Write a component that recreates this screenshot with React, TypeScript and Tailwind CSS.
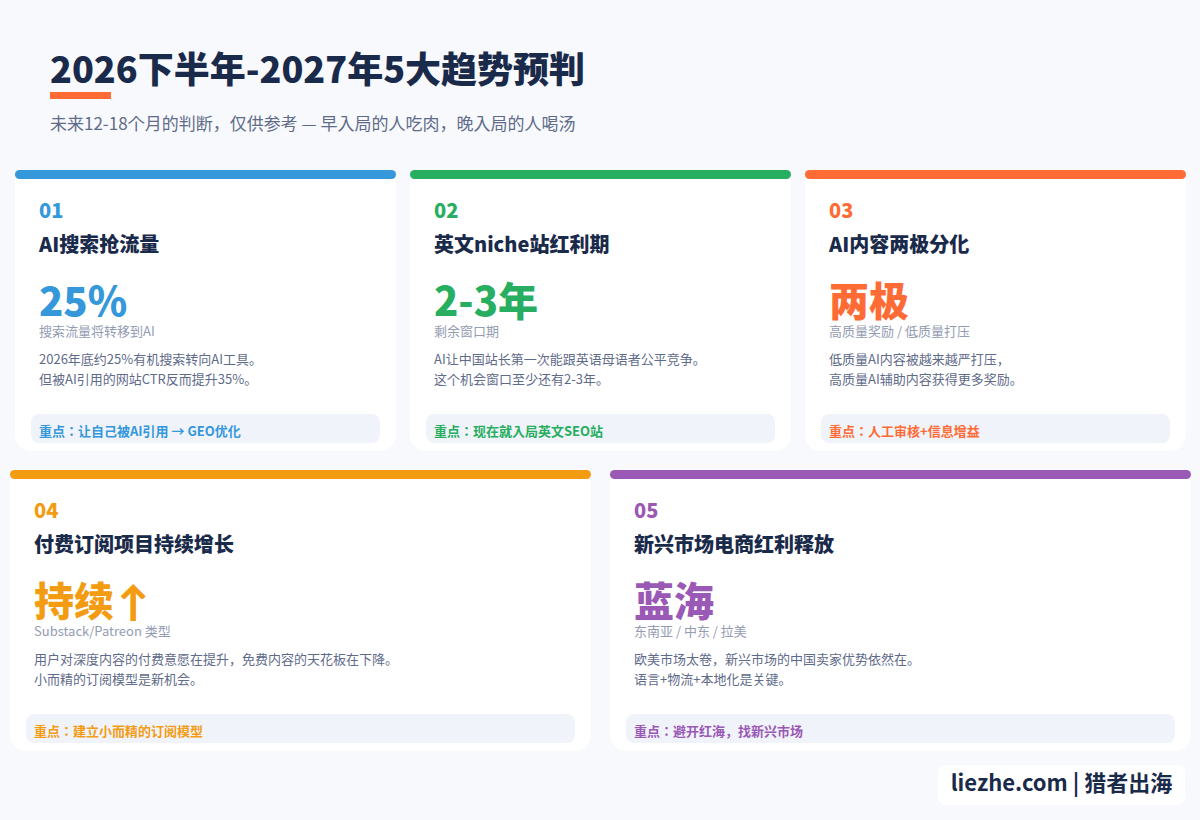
const font = "font-['Noto_Sans_CJK_JP','Noto_Sans',sans-serif]";

type Trend = {
  no: string;
  title: string;
  stat: string;
  arrow?: boolean;
  label: string;
  lines: string[];
  point: string;
  bar: string;
  text: string;
};

const topRow: Trend[] = [
  {
    no: "01",
    title: "AI搜索抢流量",
    stat: "25%",
    label: "搜索流量将转移到AI",
    lines: ["2026年底约25%有机搜索转向AI工具。", "但被AI引用的网站CTR反而提升35%。"],
    point: "重点：让自己被AI引用 → GEO优化",
    bar: "bg-[#3498db]",
    text: "text-[#3498db]",
  },
  {
    no: "02",
    title: "英文niche站红利期",
    stat: "2-3年",
    label: "剩余窗口期",
    lines: ["AI让中国站长第一次能跟英语母语者公平竞争。", "这个机会窗口至少还有2-3年。"],
    point: "重点：现在就入局英文SEO站",
    bar: "bg-[#27ae60]",
    text: "text-[#27ae60]",
  },
  {
    no: "03",
    title: "AI内容两极分化",
    stat: "两极",
    label: "高质量奖励 / 低质量打压",
    lines: ["低质量AI内容被越来越严打压，", "高质量AI辅助内容获得更多奖励。"],
    point: "重点：人工审核+信息增益",
    bar: "bg-[#ff6b35]",
    text: "text-[#ff6b35]",
  },
];

const bottomRow: Trend[] = [
  {
    no: "04",
    title: "付费订阅项目持续增长",
    stat: "持续 ",
    arrow: true,
    label: "Substack/Patreon 类型",
    lines: ["用户对深度内容的付费意愿在提升，免费内容的天花板在下降。", "小而精的订阅模型是新机会。"],
    point: "重点：建立小而精的订阅模型",
    bar: "bg-[#f39c12]",
    text: "text-[#f39c12]",
  },
  {
    no: "05",
    title: "新兴市场电商红利释放",
    stat: "蓝海",
    label: "东南亚 / 中东 / 拉美",
    lines: ["欧美市场太卷，新兴市场的中国卖家优势依然在。", "语言+物流+本地化是关键。"],
    point: "重点：避开红海，找新兴市场",
    bar: "bg-[#9b59b6]",
    text: "text-[#9b59b6]",
  },
];

function TrendCard({ item }: { item: Trend }) {
  return (
    <div className="flex h-[281px] min-w-0 flex-1 flex-col">
      <div className={`h-[9px] shrink-0 rounded-[5px] ${item.bar}`} />
      <div className="flex flex-1 flex-col rounded-b-2xl bg-white px-4 pb-2">
        <div className="flex-1 px-2">
          <div className={`mt-[17px] h-[28px] text-[20px] leading-[28px] font-extrabold ${item.text}`}>{item.no}</div>
          <div className="mt-[5px] h-[30px] text-[20px] leading-[30px] font-extrabold text-[#1a2a4a]">{item.title}</div>
          <div className={`mt-[18px] h-[44px] text-[40px] leading-[44px] font-black ${item.text}`}>
            {item.stat}
            {item.arrow ? (
              <span className="-ml-[5px] font-['Lato'] font-bold [-webkit-text-stroke:1px_#f39c12]">↑</span>
            ) : null}
          </div>
          <div className="h-[19px] text-[13px] leading-[19px] text-[#949cb2]">{item.label}</div>
          <div className="mt-[9px] text-[13px] leading-[20px] text-[#5f6b8a]">
            {item.lines.map((line) => (
              <div key={line}>{line}</div>
            ))}
          </div>
        </div>
        <div className={`h-[29px] overflow-hidden rounded-lg bg-[#f0f3fa] px-2 pt-[7px] text-[13px] leading-[20px] font-bold ${item.text}`}>
          {item.point}
        </div>
      </div>
    </div>
  );
}

export default function App() {
  return (
    <div className={`flex h-[820px] w-[1200px] flex-col overflow-hidden bg-[#f8f9fc] ${font}`}>
      <header className="h-[170px] shrink-0 pt-[42px] pl-[50px]">
        <h1 className="h-[50px] text-[36px] leading-[50px] font-black text-[#1a2a4a]">2026下半年-2027年5大趋势预判</h1>
        <div className="h-[7px] w-[61px] bg-[#ff6b35]" />
        <p className="mt-[11px] text-[17px] leading-[26px] text-[#5f6b8a]">
          未来12-18个月的判断，仅供参考 — 早入局的人吃肉，晚入局的人喝汤
        </p>
      </header>
      <div className="flex gap-[14px] pr-[14px] pl-[15px]">
        {topRow.map((item) => (
          <TrendCard key={item.no} item={item} />
        ))}
      </div>
      <div className="mt-[19px] flex gap-[19px] pr-[9px] pl-[10px]">
        {bottomRow.map((item) => (
          <TrendCard key={item.no} item={item} />
        ))}
      </div>
      <div className="mt-[14px] flex justify-end pr-[15px]">
        <div className="flex h-[40px] w-[247px] items-center justify-center rounded-lg bg-white pb-[7px] text-[22px] leading-[33px] font-bold text-[#1a2a4a]">
          liezhe.com | 猎者出海
        </div>
      </div>
    </div>
  );
}
